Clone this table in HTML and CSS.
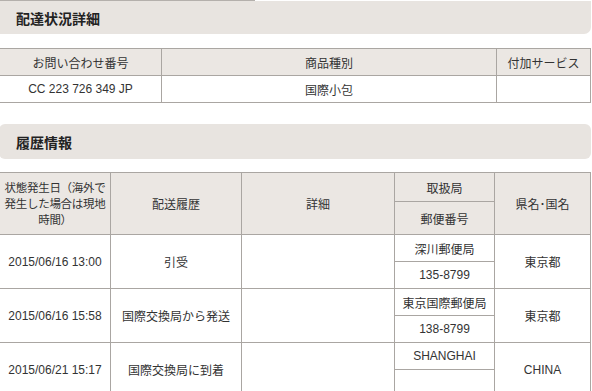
FILE: index.html
```html
<!DOCTYPE html>
<html lang="ja">
<head>
<meta charset="utf-8">
<title>配達状況詳細</title>
<link rel="stylesheet" href="styles.css">
</head>
<body>
<div class="page">
  <div class="topline"></div>
  <div class="band band-first"><h2 class="band-title">配達状況詳細</h2></div>
  <table class="grid grid-summary">
    <colgroup><col class="c-162"><col class="c-335"><col class="c-94"></colgroup>
    <tr class="row-head"><th>お問い合わせ番号</th><th>商品種別</th><th>付加サービス</th></tr>
    <tr class="row-data"><td>CC 223 726 349 JP</td><td>国際小包</td><td></td></tr>
  </table>

  <div class="band band-second"><h2 class="band-title">履歴情報</h2></div>
  <table class="grid grid-history">
    <colgroup><col class="c-111"><col class="c-131"><col class="c-153"><col class="c-100"><col class="c-96"></colgroup>
    <tr class="row-h1">
      <th rowspan="2" class="th-date">状態発生日（海外で<br>発生した場合は現地<br>時間）</th>
      <th rowspan="2">配送履歴</th>
      <th rowspan="2">詳細</th>
      <th>取扱局</th>
      <th rowspan="2">県名･国名</th>
    </tr>
    <tr class="row-h2"><th>郵便番号</th></tr>

    <tr class="row-sub"><td rowspan="2">2015/06/16 13:00</td><td rowspan="2">引受</td><td rowspan="2"></td><td>深川郵便局</td><td rowspan="2">東京都</td></tr>
    <tr class="row-sub"><td>135-8799</td></tr>

    <tr class="row-sub"><td rowspan="2">2015/06/16 15:58</td><td rowspan="2">国際交換局から発送</td><td rowspan="2"></td><td>東京国際郵便局</td><td rowspan="2">東京都</td></tr>
    <tr class="row-sub"><td>138-8799</td></tr>

    <tr class="row-sub"><td rowspan="2">2015/06/21 15:17</td><td rowspan="2">国際交換局に到着</td><td rowspan="2"></td><td>SHANGHAI</td><td rowspan="2">CHINA</td></tr>
    <tr class="row-sub"><td></td></tr>
  </table>
</div>
</body>
</html>
```
FILE: styles.css
```css
html, body {
  margin: 0;
  padding: 0;
  background: #ffffff;
}
body {
  font-family: "Liberation Sans", "Noto Sans CJK JP", sans-serif;
  font-size: 12px;
  color: #333333;
  overflow: hidden;
}
.page {
  width: 592px;
  margin-left: -1px;
}
.topline {
  width: 256px;
  height: 1px;
  background: #b4b0ac;
}
.band {
  background: #e8e4e0;
  height: 33px;
  display: flex;
  align-items: center;
  border-radius: 7px;
}
.band-first {
  border-radius: 0 0 7px 0;
  margin-bottom: 14px;
}
.band-second {
  height: 35px;
  margin-top: 21px;
  margin-bottom: 13px;
  border-radius: 6px;
}
.band-title {
  margin: 0 0 0 17px;
  font-size: 14px;
  font-weight: bold;
  color: #222222;
  font-family: "Noto Sans CJK JP", sans-serif;
}
.grid {
  width: 592px;
  table-layout: fixed;
  border-collapse: collapse;
}
.grid th, .grid td {
  border: 1px solid #aaa6a2;
  text-align: center;
  vertical-align: middle;
  padding: 0 3px;
  font-weight: normal;
  white-space: nowrap;
  overflow: hidden;
}
.grid th {
  background: #ebe7e3;
}
.c-162 { width: 162px; }
.c-335 { width: 335px; }
.c-94 { width: 94px; }
.c-111 { width: 111px; }
.c-131 { width: 131px; }
.c-153 { width: 153px; }
.c-100 { width: 100px; }
.c-96 { width: 96px; }
.row-head { height: 27px; }
.row-data { height: 27px; }
.grid th.th-date {
  line-height: 16px;
  padding: 0;
  font-size: 11.5px;
  letter-spacing: -0.3px;
}
.row-h1 { height: 29px; }
.row-h2 { height: 33px; }
.row-sub { height: 27px; }
```
